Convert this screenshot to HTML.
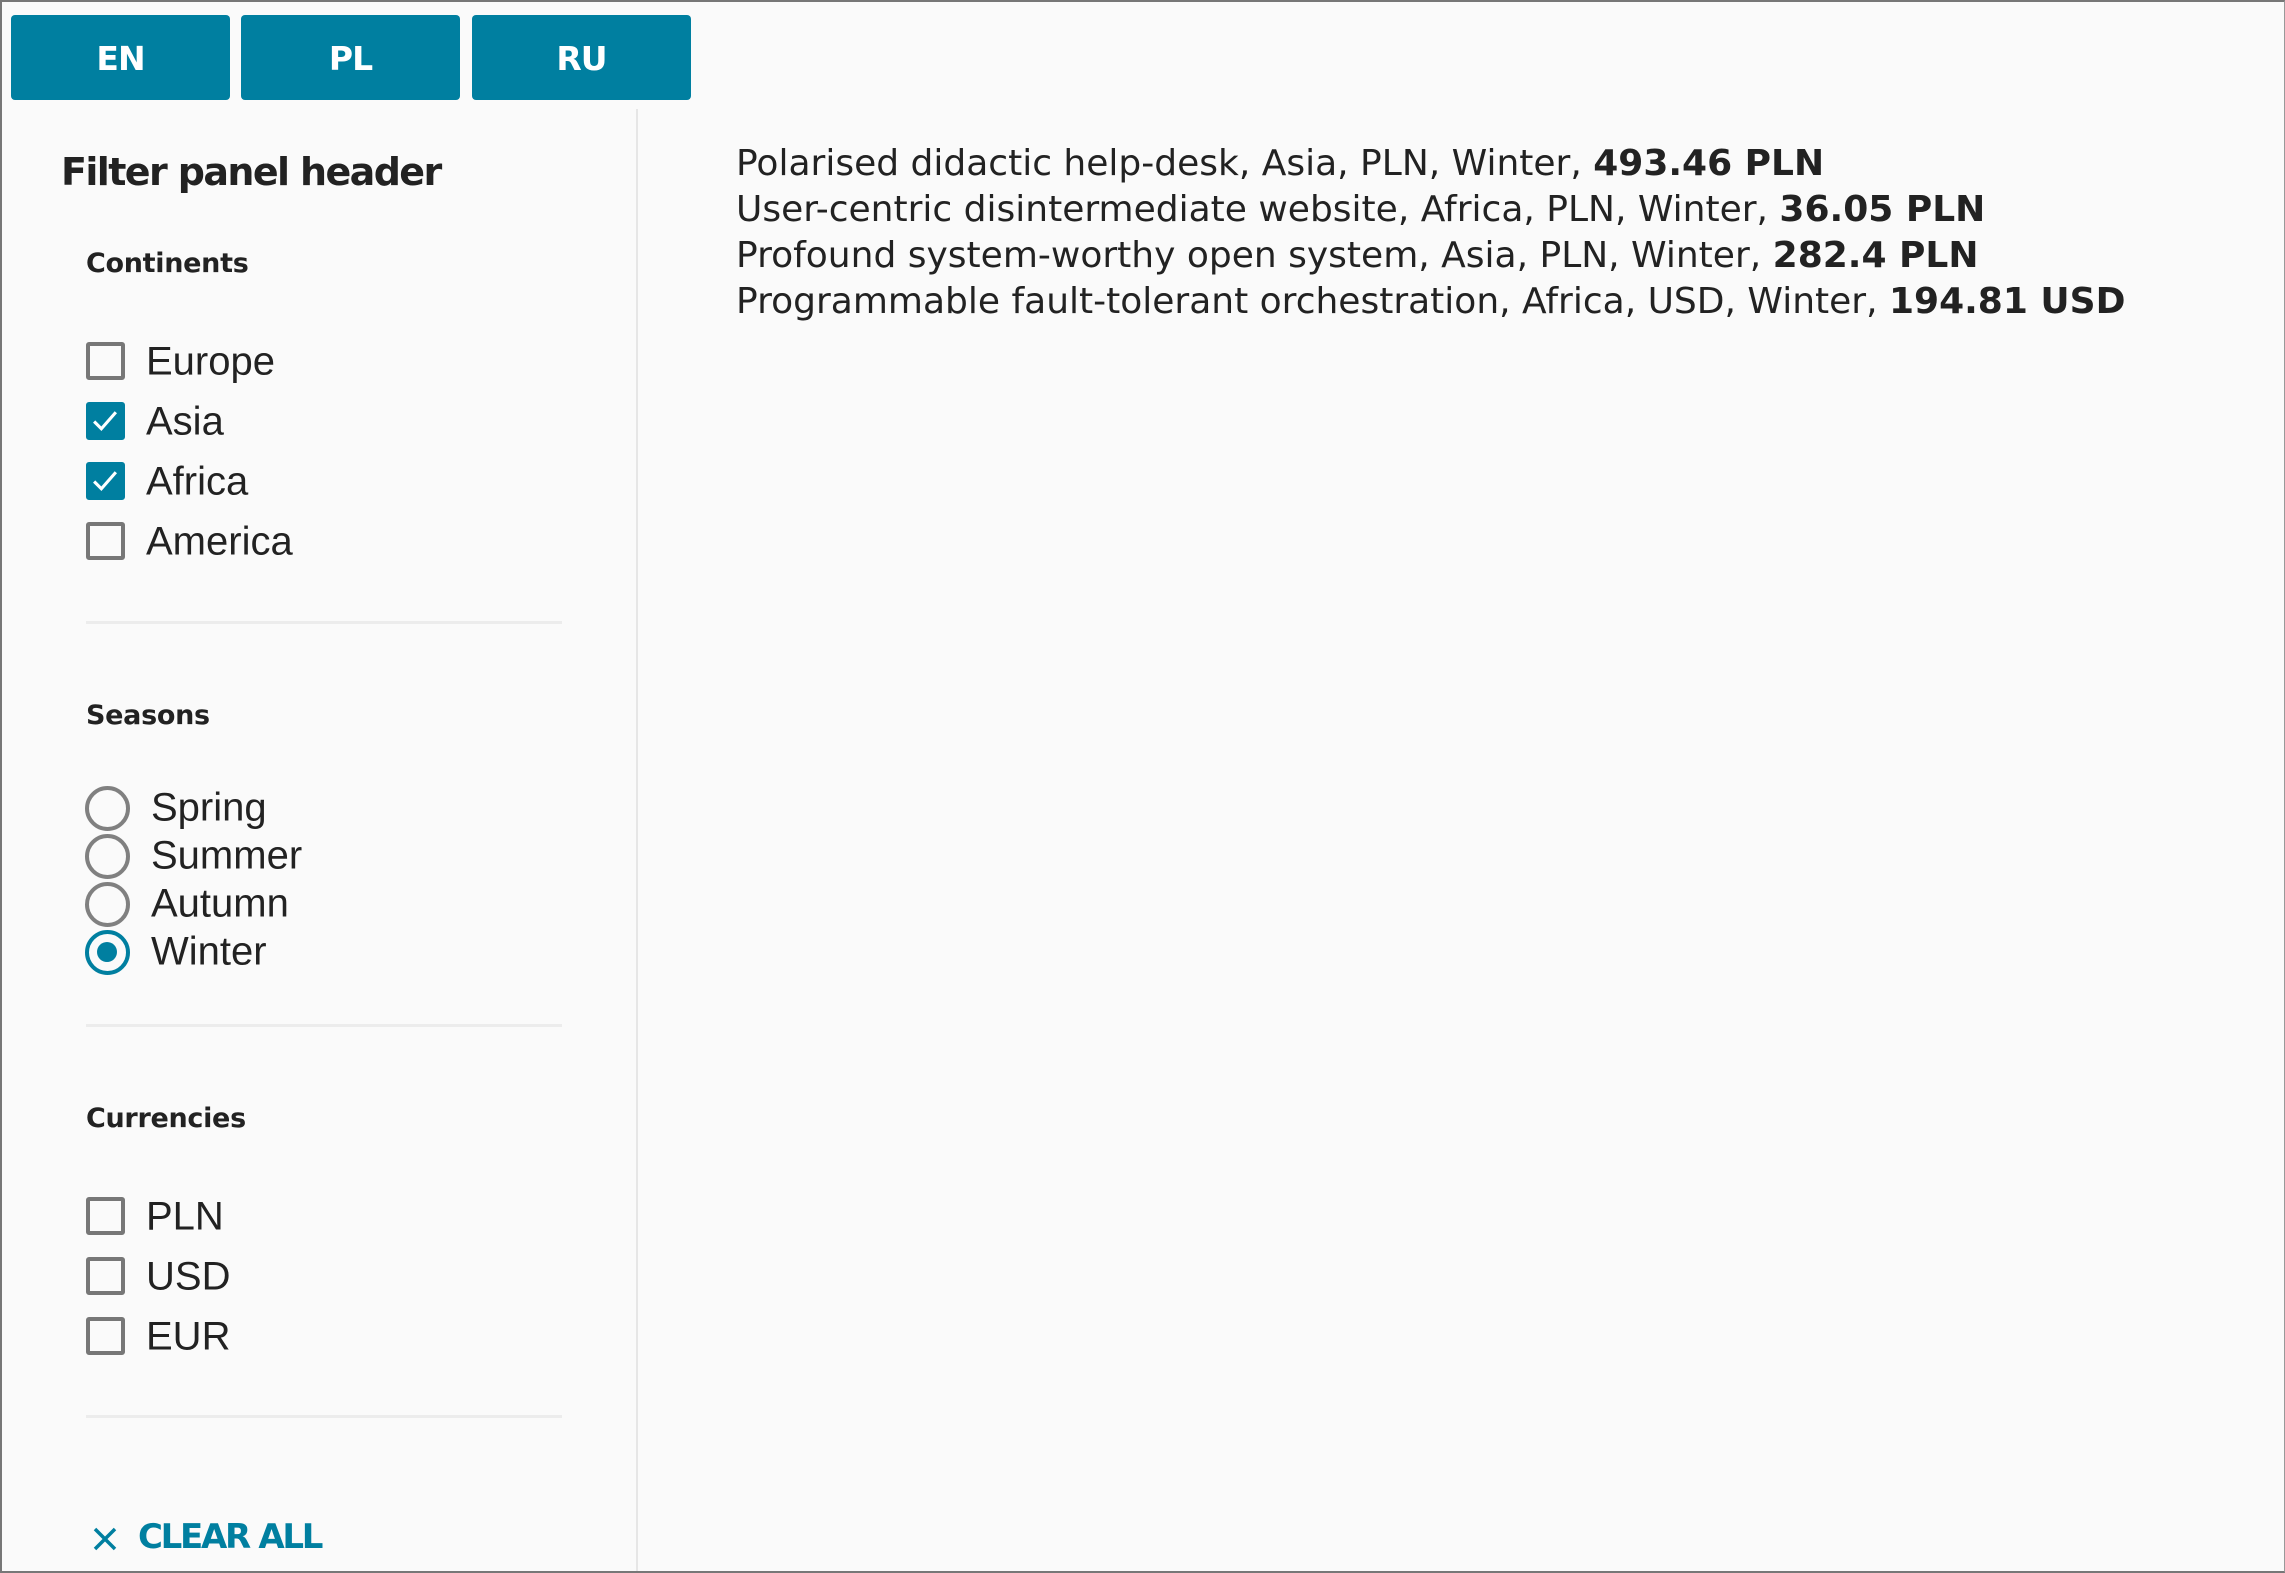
<!DOCTYPE html>
<html><head><meta charset="utf-8"><style>
*{margin:0;padding:0;box-sizing:border-box}
html,body{width:2285px;height:1573px;overflow:hidden;background:#fafafa}
body{position:relative;font-family:"Liberation Sans",Arial,sans-serif;color:#222}
.frame{position:absolute;left:0;top:0;width:2285px;height:1573px;border:2px solid #777;border-right:1px solid #999;pointer-events:none}
.btn{position:absolute;top:15px;width:219px;height:85px;background:#007fa0;border-radius:4px;color:#fff;font:bold 33px "DejaVu Sans",sans-serif;display:flex;align-items:center;justify-content:center;letter-spacing:-1px;padding-top:2px}
.a{position:absolute;white-space:nowrap}
.h{font:bold 38px "DejaVu Sans",sans-serif;letter-spacing:-1.6px;color:#222}
.sec{font:bold 27px "DejaVu Sans",sans-serif;letter-spacing:-0.3px;color:#222}
.cb{position:absolute;left:86px;width:39px;height:38px;border:4px solid #777;border-radius:3px}
.cb.on{background:#007fa0;border-color:#007fa0}
.lbl{position:absolute;font-size:40px;color:#222;transform:translateY(-50%);white-space:nowrap}
.rd{position:absolute;left:85px;width:45px;height:45px;border:4.5px solid #808080;border-radius:50%}
.rd.on{border-color:#007fa0}
.rd.on:after{content:"";position:absolute;left:8px;top:8px;width:20px;height:20px;border-radius:50%;background:#007fa0}
.hr{position:absolute;left:86px;width:476px;height:3px;background:#ececec}
.txt{position:absolute;left:736px;font:36px "DejaVu Sans",sans-serif;letter-spacing:0px;color:#222;line-height:46px;top:141px;white-space:nowrap}
.txt b{font-weight:bold}
</style></head><body>
<div class="btn" style="left:11px">EN</div>
<div class="btn" style="left:241px">PL</div>
<div class="btn" style="left:472px">RU</div>
<div style="position:absolute;left:636px;top:109px;width:2px;height:1470px;background:#e6e6e6"></div>

<div class="a h" style="left:61px;top:150px">Filter panel header</div>
<div class="a sec" style="left:86px;top:248px">Continents</div>

<div class="cb" style="top:342px"></div><div class="lbl" style="left:146px;top:362px">Europe</div>
<div class="cb on" style="top:402px"><svg width="31" height="30" viewBox="0 0 30 29" style="position:absolute;left:0;top:0"><path d="M4 15 L11 22 L25 6" stroke="#fff" stroke-width="3" fill="none"/></svg></div><div class="lbl" style="left:146px;top:422px">Asia</div>
<div class="cb on" style="top:462px"><svg width="31" height="30" viewBox="0 0 30 29" style="position:absolute;left:0;top:0"><path d="M4 15 L11 22 L25 6" stroke="#fff" stroke-width="3" fill="none"/></svg></div><div class="lbl" style="left:146px;top:482px">Africa</div>
<div class="cb" style="top:522px"></div><div class="lbl" style="left:146px;top:542px">America</div>
<div class="hr" style="top:621px"></div>

<div class="a sec" style="left:86px;top:700px">Seasons</div>
<div class="rd" style="top:786px"></div><div class="lbl" style="left:151px;top:808px">Spring</div>
<div class="rd" style="top:834px"></div><div class="lbl" style="left:151px;top:856px">Summer</div>
<div class="rd" style="top:882px"></div><div class="lbl" style="left:151px;top:904px">Autumn</div>
<div class="rd on" style="top:930px"></div><div class="lbl" style="left:151px;top:952px">Winter</div>
<div class="hr" style="top:1024px"></div>

<div class="a sec" style="left:86px;top:1103px">Currencies</div>
<div class="cb" style="top:1197px"></div><div class="lbl" style="left:146px;top:1217px">PLN</div>
<div class="cb" style="top:1257px"></div><div class="lbl" style="left:146px;top:1277px">USD</div>
<div class="cb" style="top:1317px"></div><div class="lbl" style="left:146px;top:1337px">EUR</div>
<div class="hr" style="top:1415px"></div>

<svg style="position:absolute;left:93px;top:1527px" width="24" height="24" viewBox="0 0 24 24"><path d="M2 2L22 22M22 2L2 22" stroke="#007fa0" stroke-width="3.5"/></svg>
<div class="a" style="left:138px;top:1517px;font:bold 34px 'DejaVu Sans',sans-serif;letter-spacing:-2.3px;color:#007fa0">CLEAR ALL</div>

<div class="txt">Polarised didactic help-desk, Asia, PLN, Winter, <b>493.46 PLN</b><br>User-centric disintermediate website, Africa, PLN, Winter, <b>36.05 PLN</b><br>Profound system-worthy open system, Asia, PLN, Winter, <b>282.4 PLN</b><br>Programmable fault-tolerant orchestration, Africa, USD, Winter, <b>194.81 USD</b></div>
<div class="frame"></div>
</body></html>
